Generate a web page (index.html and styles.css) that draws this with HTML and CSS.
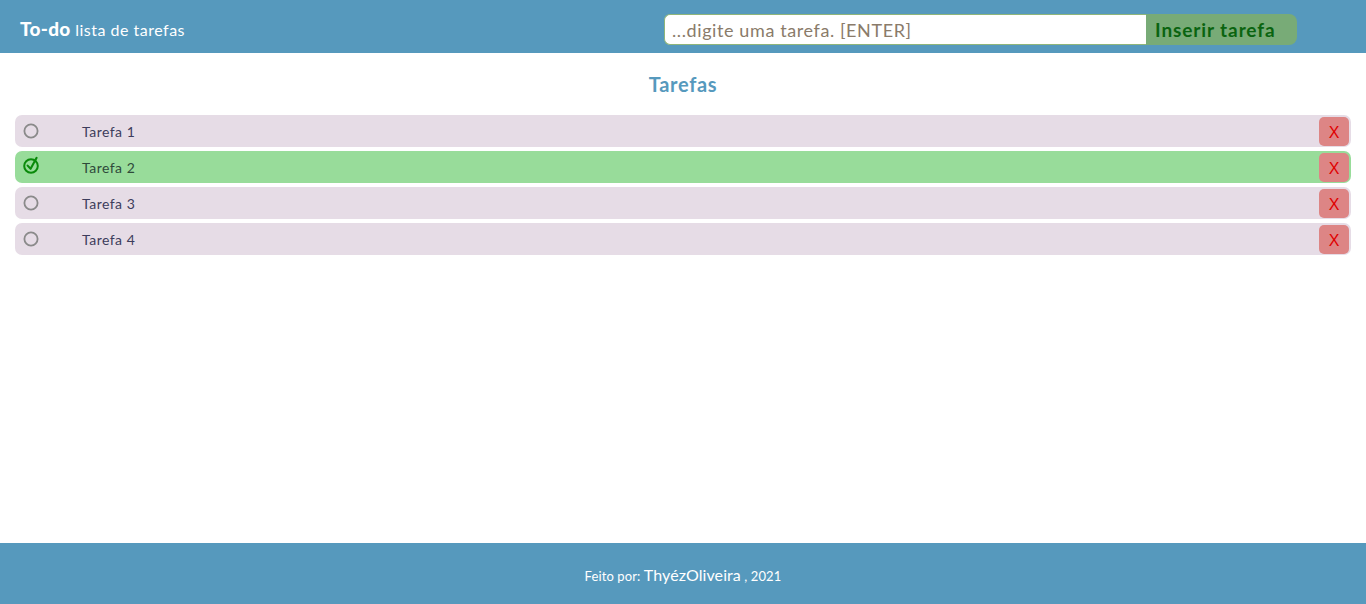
FILE: index.html
```html
<!DOCTYPE html>
<html lang="pt-br">
<head>
<meta charset="utf-8">
<title>To-do</title>
<link rel="stylesheet" href="styles.css">
</head>
<body>
<div class="page">
  <header class="topbar">
    <h1 class="brand"><strong>To-do</strong> <span>lista de tarefas</span></h1>
    <form class="new-task">
      <input class="new-task-input" type="text" placeholder="...digite uma tarefa. [ENTER]">
      <button class="new-task-btn" type="button">Inserir tarefa</button>
    </form>
  </header>
  <main class="content">
    <h2 class="section-title">Tarefas</h2>
    <ul class="tasks">
      <li class="task">
        <span class="task-check"><svg width="18" height="18" viewBox="0 0 18 18"><circle cx="8" cy="9" r="6.6" fill="none" stroke="#8a8a8a" stroke-width="1.8"/></svg></span>
        <span class="task-text">Tarefa 1</span>
        <button class="task-del" type="button">X</button>
      </li>
      <li class="task done">
        <span class="task-check"><svg width="20" height="20" viewBox="0 0 20 20"><circle cx="8" cy="11" r="6.8" fill="none" stroke="#0a8a0a" stroke-width="2"/><path d="M4.6 10.6 L7.6 13.8 L13.6 2.8" fill="none" stroke="#0a8a0a" stroke-width="2.1" stroke-linecap="round" stroke-linejoin="round"/></svg></span>
        <span class="task-text">Tarefa 2</span>
        <button class="task-del" type="button">X</button>
      </li>
      <li class="task">
        <span class="task-check"><svg width="18" height="18" viewBox="0 0 18 18"><circle cx="8" cy="9" r="6.6" fill="none" stroke="#8a8a8a" stroke-width="1.8"/></svg></span>
        <span class="task-text">Tarefa 3</span>
        <button class="task-del" type="button">X</button>
      </li>
      <li class="task">
        <span class="task-check"><svg width="18" height="18" viewBox="0 0 18 18"><circle cx="8" cy="9" r="6.6" fill="none" stroke="#8a8a8a" stroke-width="1.8"/></svg></span>
        <span class="task-text">Tarefa 4</span>
        <button class="task-del" type="button">X</button>
      </li>
    </ul>
  </main>
  <footer class="footer">
    <p>Feito por: <span class="author">ThyézOliveira</span> , 2021</p>
  </footer>
</div>
</body>
</html>
```
FILE: styles.css
```css
* { box-sizing: border-box; }
html, body { margin: 0; padding: 0; }
body {
  font-family: "Lato", "Noto Sans", sans-serif;
  background: #fff;
}
.page {
  min-height: 604px;
  display: flex;
  flex-direction: column;
}
.topbar {
  height: 53px;
  background: #5699bd;
  display: flex;
  align-items: center;
  padding: 0 0 0 20px;
}
.brand {
  margin: 0;
  color: #fff;
  font-weight: 400;
  font-size: 16px;
  letter-spacing: 0.5px;
  width: 644px;
  padding-top: 4px;
}
.brand strong { font-size: 19px; font-weight: 900; letter-spacing: 0.3px; }
.new-task {
  display: flex;
  margin: 0;
  padding-top: 6px;
}
.new-task-input {
  width: 482px;
  height: 31px;
  border: 1px solid #8fb57a;
  border-right: none;
  border-radius: 6px 0 0 6px;
  padding: 0 7px;
  font-family: inherit;
  font-size: 18px;
  letter-spacing: 0.6px;
  color: #333;
  outline: none;
}
.new-task-input::placeholder { color: #8a7b6a; }
.new-task-btn {
  width: 151px;
  height: 31px;
  border: none;
  background: #78ab77;
  color: #0a6410;
  font-family: inherit;
  font-weight: 700;
  font-size: 19px;
  letter-spacing: 0.9px;
  border-radius: 0 8px 8px 0;
  text-align: left;
  padding: 0 9px;
}
.content {
  flex: 1;
  padding: 0 15px 0 15px;
}
.section-title {
  margin: 0;
  padding: 21px 0 21px;
  text-align: center;
  color: #5699bd;
  font-size: 20px;
  font-weight: 700;
  letter-spacing: 0.7px;
  line-height: 20px;
}
.tasks {
  list-style: none;
  margin: 0;
  padding: 0;
  display: flex;
  flex-direction: column;
  gap: 4px;
}
.task {
  height: 32px;
  width: 1336px;
  display: flex;
  align-items: center;
  background: #e6dce6;
  border-radius: 7px;
  padding: 0 2px 0 8px;
}
.task.done { background: #98dc9a; }
.task-check {
  width: 59px;
  display: flex;
  align-items: center;
  height: 20px;
}
.task.done .task-check { margin-top: -4px; }
.task-text {
  flex: 1;
  font-size: 14px;
  letter-spacing: 0.5px;
  color: #3d3d5c;
}
.task.done .task-text { color: #2f4a3a; }
.task-del {
  width: 30px;
  height: 29px;
  border: none;
  border-radius: 5px;
  background: #dd8585;
  color: #e00000;
  font-family: "Liberation Sans", sans-serif;
  font-size: 16px;
  padding: 3px 0 0;
}
.footer {
  height: 61px;
  background: #5699bd;
  color: #fff;
  display: flex;
  align-items: center;
  justify-content: center;
}
.footer p {
  margin: 0;
  font-size: 13px;
  padding-top: 2px;
  letter-spacing: 0.1px;
}
.footer .author { font-size: 16px; }
```
